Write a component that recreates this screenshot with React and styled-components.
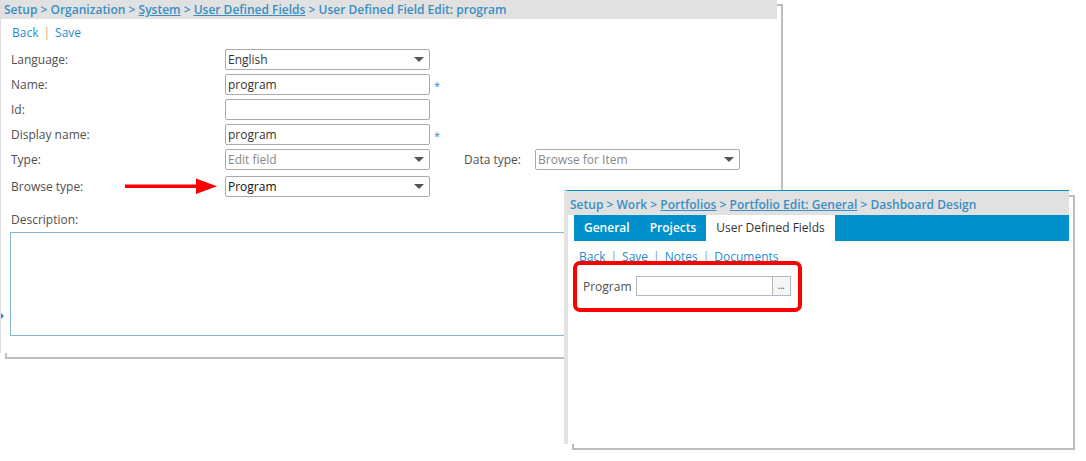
import React from "react";
import styled, { createGlobalStyle } from "styled-components";

const GlobalStyle = createGlobalStyle`
  html, body { margin: 0; padding: 0; }
  body { font-family: "Open Sans", "DejaVu Sans", sans-serif; }
  * { box-sizing: border-box; }
`;

const Desktop = styled.div`
  position: relative;
  z-index: 0;
  width: 1086px;
  height: 461px;
  overflow: hidden;
  background: #ffffff;
`;

const Window = styled.div`
  position: absolute;
  left: ${(p) => p.$left}px;
  top: ${(p) => p.$top}px;
  width: ${(p) => p.$width}px;
  height: ${(p) => p.$height}px;
  background: #ffffff;
  display: flex;
  flex-direction: column;
  border-left: ${(p) => p.$leftBorder};
  border-top: ${(p) => p.$topBorder || "none"};
  &::before {
    content: "";
    position: absolute;
    left: 4px;
    top: 4px;
    right: -6px;
    bottom: -6px;
    border: 2px solid #bdbdbd;
    z-index: -1;
  }
`;

const Header = styled.div`
  height: ${(p) => p.$h}px;
  background: #e1e1e1;
  padding: ${(p) => p.$pad};
  font-size: 12px;
  font-weight: 600;
  color: #3a8fc3;
  white-space: nowrap;
  line-height: ${(p) => p.$lh}px;
  flex-shrink: 0;
`;

const Crumb = styled.span`
  text-decoration: ${(p) => (p.$link ? "underline" : "none")};
`;

const Links = styled.div`
  display: flex;
  align-items: center;
  gap: 5px;
  margin: ${(p) => p.$margin};
  font-size: 12px;
  line-height: 16px;
  color: #1f8dd2;
  white-space: nowrap;
`;

const Sep = styled.span`
  color: ${(p) => p.$color};
`;

const Form = styled.div`
  display: flex;
  flex-direction: column;
  padding-left: 10px;
  margin-top: 8px;
`;

const Row = styled.div`
  display: flex;
  align-items: center;
  height: 21px;
  margin-bottom: ${(p) => p.$mb ?? 4}px;
`;

const Label = styled.div`
  width: ${(p) => p.$w}px;
  flex-shrink: 0;
  font-size: 12px;
  color: #505050;
  white-space: nowrap;
`;

const Field = styled.div`
  width: 205px;
  height: 21px;
  flex-shrink: 0;
  border: 1px solid #ababab;
  border-radius: 2px;
  display: flex;
  align-items: center;
  justify-content: space-between;
  padding: 0 5px 0 2px;
  font-size: 12px;
  color: ${(p) => p.$color || "#333"};
  background: #fff;
`;

const Caret = styled.span`
  width: 0;
  height: 0;
  border-left: 5px solid transparent;
  border-right: 5px solid transparent;
  border-top: 5px solid #555;
`;

const Star = styled.span`
  width: 34px;
  flex-shrink: 0;
  padding-left: 4px;
  color: #2a8ccc;
  font-size: 11px;
  align-self: flex-end;
  line-height: 18px;
`;

const DescLabel = styled(Label)`
  margin-top: 14px;
  line-height: 17px;
`;

const TextArea = styled.div`
  margin-top: 4px;
  margin-left: -1px;
  width: 760px;
  height: 104px;
  border: 1px solid #86b6d3;
`;

const Marker = styled.span`
  position: absolute;
  left: 0;
  top: 313px;
  width: 0;
  height: 0;
  border-top: 3px solid transparent;
  border-bottom: 3px solid transparent;
  border-left: 3px solid #2b8fd0;
`;

const ArrowSvg = styled.svg`
  position: absolute;
  left: 122px;
  top: 177px;
`;

const TabBar = styled.div`
  display: flex;
  height: 26px;
  margin-left: 6px;
  background: #0091cc;
  flex-shrink: 0;
`;

const Tab = styled.div`
  padding: 0 10px;
  line-height: 26px;
  font-size: 12px;
  font-weight: ${(p) => (p.$active ? 400 : 600)};
  color: ${(p) => (p.$active ? "#333" : "#ffffff")};
  background: ${(p) => (p.$active ? "#ffffff" : "transparent")};
  white-space: nowrap;
`;

const ProgramRow = styled.div`
  display: flex;
  align-items: center;
  gap: 4px;
  margin: 11px 0 0 15px;
  height: 20px;
`;

const ProgramLabel = styled.span`
  font-size: 12px;
  color: #505050;
`;

const Browse = styled.div`
  display: flex;
  height: 20px;
`;

const BrowseInput = styled.div`
  width: 137px;
  height: 20px;
  border: 1px solid #b2b8be;
`;

const BrowseButton = styled.div`
  width: 18px;
  height: 20px;
  border: 1px solid #b2b8be;
  border-left: none;
  background: #f3f5f7;
  color: #2c5a86;
  font-size: 10px;
  line-height: 16px;
  text-align: center;
  letter-spacing: -0.5px;
`;

const Highlight = styled.div`
  position: absolute;
  left: 5px;
  top: 70px;
  width: 229px;
  height: 51px;
  border: 4px solid #ff0000;
  border-radius: 7px;
`;

export default function App() {
  return (
    <Desktop>
      <GlobalStyle />
      <Window $left={0} $top={0} $width={777} $height={353} $leftBorder="1px solid #dedede">
        <Header $h={19} $lh={19} $pad="0 0 0 3px">
          <Crumb>Setup</Crumb> &gt; <Crumb>Organization</Crumb> &gt; <Crumb $link>System</Crumb> &gt;{" "}
          <Crumb $link>User Defined Fields</Crumb> &gt; <Crumb>User Defined Field Edit: program</Crumb>
        </Header>
        <Links $margin="6px 0 0 11px">
          <span>Back</span>
          <Sep $color="#d8a46c">|</Sep>
          <span>Save</span>
        </Links>
        <Form>
          <Row>
            <Label $w={214}>Language:</Label>
            <Field>
              English
              <Caret />
            </Field>
          </Row>
          <Row>
            <Label $w={214}>Name:</Label>
            <Field>program</Field>
            <Star>*</Star>
          </Row>
          <Row>
            <Label $w={214}>Id:</Label>
            <Field />
          </Row>
          <Row>
            <Label $w={214}>Display name:</Label>
            <Field>program</Field>
            <Star>*</Star>
          </Row>
          <Row $mb={6}>
            <Label $w={214}>Type:</Label>
            <Field $color="#888">
              Edit field
              <Caret />
            </Field>
            <Star />
            <Label $w={71}>Data type:</Label>
            <Field $color="#888">
              Browse for Item
              <Caret />
            </Field>
          </Row>
          <Row $mb={0}>
            <Label $w={214}>Browse type:</Label>
            <Field $color="#111">
              Program
              <Caret />
            </Field>
          </Row>
          <DescLabel $w={214}>Description:</DescLabel>
          <TextArea />
        </Form>
        <Marker />
        <ArrowSvg width="96" height="20" viewBox="0 0 96 20">
          <rect x="2" y="7.5" width="76" height="3.5" fill="#ff0000" />
          <polygon points="73,1.5 94,9.25 73,17" fill="#ff0000" />
        </ArrowSvg>
      </Window>

      <Window
        $left={564}
        $top={190}
        $width={505}
        $height={254}
        $leftBorder="4px solid #e3e3e3"
        $topBorder="1px solid #0a90cf"
      >
        <Header $h={24} $lh={22} $pad="3px 0 0 2px">
          <Crumb>Setup</Crumb> &gt; <Crumb>Work</Crumb> &gt; <Crumb $link>Portfolios</Crumb> &gt;{" "}
          <Crumb $link>Portfolio Edit: General</Crumb> &gt; <Crumb>Dashboard Design</Crumb>
        </Header>
        <TabBar>
          <Tab>General</Tab>
          <Tab>Projects</Tab>
          <Tab $active>User Defined Fields</Tab>
        </TabBar>
        <Links $margin="8px 0 0 11px">
          <span>Back</span>
          <Sep $color="#7e9bb5">|</Sep>
          <span>Save</span>
          <Sep $color="#7e9bb5">|</Sep>
          <span>Notes</span>
          <Sep $color="#7e9bb5">|</Sep>
          <span>Documents</span>
        </Links>
        <ProgramRow>
          <ProgramLabel>Program</ProgramLabel>
          <Browse>
            <BrowseInput />
            <BrowseButton>...</BrowseButton>
          </Browse>
        </ProgramRow>
        <Highlight />
      </Window>
    </Desktop>
  );
}
